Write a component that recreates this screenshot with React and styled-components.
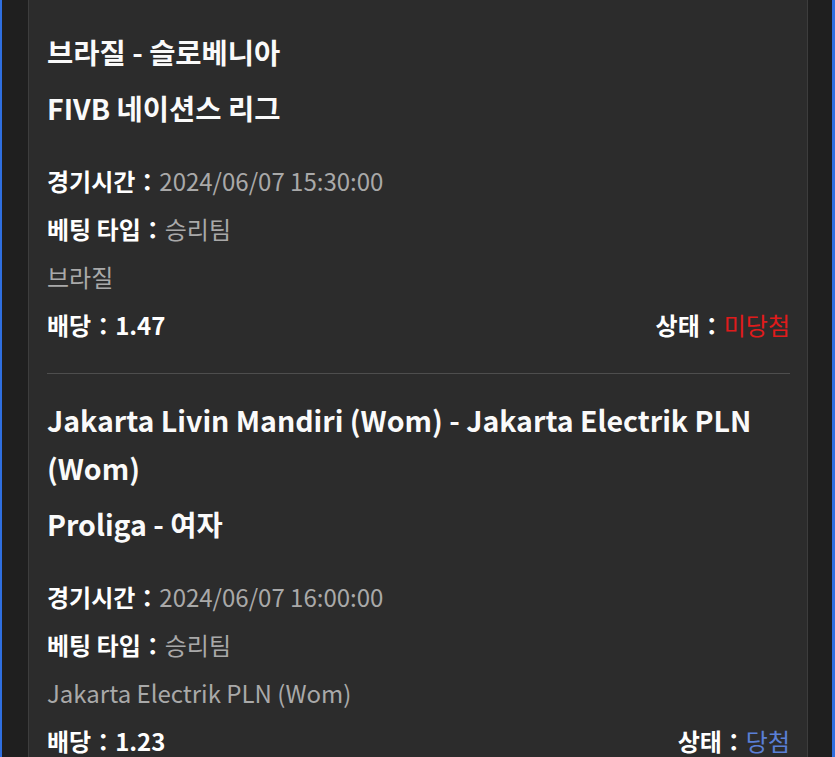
import React from "react";
import styled, { createGlobalStyle } from "styled-components";

const Global = createGlobalStyle`
  html, body { margin: 0; padding: 0; background: #1f1f1f; }
  body { font-family: "Noto Sans CJK KR", "Noto Sans", sans-serif; overflow: hidden; }
`;

const Frame = styled.div`
  height: 757px;
  box-sizing: border-box;
  border-left: 2px solid #2f6fe0;
  border-right: 3px solid #2f6fe0;
  background: #1f1f1f;
  padding: 0 24px 0 26px;
  overflow: hidden;
`;

const Card = styled.div`
  background: #2c2c2c;
  border: 1px solid #3d3d3d;
  border-top: none;
  padding: 6px 17px 0 18px;
  min-height: 100%;
  box-sizing: border-box;
`;

const Item = styled.div`
  padding: 22px 0 24px;
  border-bottom: 1px solid #4e4e4e;
`;

const Titles = styled.div`
  display: flex;
  flex-direction: column;
  gap: 8px;
  margin-bottom: 25px;
`;

const Title = styled.div`
  color: #fafafa;
  font-size: 28.5px;
  font-weight: 700;
  line-height: 48px;
`;

const Row = styled.div`
  display: flex;
  justify-content: ${(p) => (p.$split ? "space-between" : "flex-start")};
  align-items: center;
  font-size: 24px;
  line-height: 48px;
  color: #a9a9a9;
`;

const Field = styled.span`
  white-space: pre;
`;

const Label = styled.span`
  color: #ffffff;
  font-weight: 700;
`;

const Value = styled.span`
  color: ${(p) => p.$color || "#a9a9a9"};
`;

const bets = [
  {
    titles: ["브라질 - 슬로베니아", "FIVB 네이션스 리그"],
    time: "2024/06/07 15:30:00",
    type: "승리팀",
    pick: "브라질",
    odds: "1.47",
    status: "미당첨",
    statusColor: "#e01b1b",
  },
  {
    titles: [
      "Jakarta Livin Mandiri (Wom) - Jakarta Electrik PLN (Wom)",
      "Proliga - 여자",
    ],
    time: "2024/06/07 16:00:00",
    type: "승리팀",
    pick: "Jakarta Electrik PLN (Wom)",
    odds: "1.23",
    status: "당첨",
    statusColor: "#5a7fd6",
  },
];

export default function App() {
  return (
    <>
      <Global />
      <Frame>
        <Card>
          {bets.map((b, i) => (
            <Item key={i}>
              <Titles>
                {b.titles.map((t) => (
                  <Title key={t}>{t}</Title>
                ))}
              </Titles>
              <Row>
                <Field>
                  <Label>{"경기시간："}</Label>
                  <Value>{b.time}</Value>
                </Field>
              </Row>
              <Row>
                <Field>
                  <Label>{"베팅 타입："}</Label>
                  <Value>{b.type}</Value>
                </Field>
              </Row>
              <Row>
                <Value>{b.pick}</Value>
              </Row>
              <Row $split>
                <Field>
                  <Label>{"배당：" + b.odds}</Label>
                </Field>
                <Field>
                  <Label>{"상태："}</Label>
                  <Value $color={b.statusColor}>{b.status}</Value>
                </Field>
              </Row>
            </Item>
          ))}
        </Card>
      </Frame>
    </>
  );
}
